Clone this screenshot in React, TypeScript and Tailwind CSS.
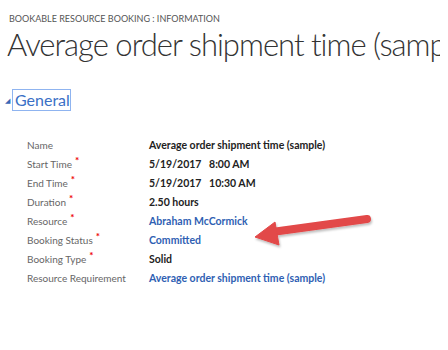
const font = { fontFamily: 'Lato, "Open Sans", sans-serif' }

type Row = { label: string; value: string; required?: boolean; link?: boolean }

const rows: Row[] = [
  { label: 'Name', value: 'Average order shipment time (sample)' },
  { label: 'Start Time', value: '5/19/2017\u00a0\u00a0\u00a08:00 AM', required: true },
  { label: 'End Time', value: '5/19/2017\u00a0\u00a0\u00a010:30 AM', required: true },
  { label: 'Duration', value: '2.50 hours', required: true },
  { label: 'Resource', value: 'Abraham McCormick', required: true, link: true },
  { label: 'Booking Status', value: 'Committed', required: true, link: true },
  { label: 'Booking Type', value: 'Solid', required: true },
  { label: 'Resource Requirement', value: 'Average order shipment time (sample)', link: true },
]

function Arrow() {
  return (
    <svg className="pointer-events-none absolute left-0 top-0" width="448" height="350">
      <defs>
        <filter id="sh" x="-10%" y="-30%" width="120%" height="160%">
          <feDropShadow dx="1" dy="2" stdDeviation="1.2" floodColor="#000" floodOpacity="0.25" />
        </filter>
      </defs>
      <g filter="url(#sh)" fill="#e24848" stroke="#e24848">
        <line x1="367" y1="219" x2="272" y2="232" strokeWidth="8" strokeLinecap="round" />
        <polygon points="255,237 275,222 279,245" strokeWidth="1" strokeLinejoin="round" />
      </g>
    </svg>
  )
}

export default function App() {
  return (
    <div className="relative h-[350px] w-[448px] overflow-hidden bg-white" style={font}>
      <div className="pl-[9px] pt-[12px] text-[9px] leading-[13px] text-[#555]">
        BOOKABLE RESOURCE BOOKING : INFORMATION
      </div>
      <div className="w-[440px] overflow-hidden whitespace-nowrap pl-[7px] text-[31px] font-light leading-[38px] tracking-[-1px] text-[#333]">
        Average order shipment time (sample)
      </div>
      <div className="mt-[26px] flex items-center pl-[5px]">
        <span className="mr-[2px] text-[7px] text-[#3a67b5]">◢</span>
        <span className="border border-[#8fb4f0] pl-[2px] text-[16px] leading-[20px] text-[#3a70c6]">General</span>
      </div>
      <div className="mt-[25px] flex flex-col pl-[27px]">
        {rows.map((r) => (
          <div key={r.label} className="flex h-[19px] items-center">
            <div className="w-[122px] text-[10px] text-[#666]">
              {r.label}
              {r.required && <span className="relative -top-[4px] ml-[3px] text-[10px] font-bold text-[#e00]">*</span>}
            </div>
            <div className={`text-[10.5px] font-bold ${r.link ? 'text-[#2f5fb3]' : 'text-[#222]'}`}>{r.value}</div>
          </div>
        ))}
      </div>
      <Arrow />
    </div>
  )
}
